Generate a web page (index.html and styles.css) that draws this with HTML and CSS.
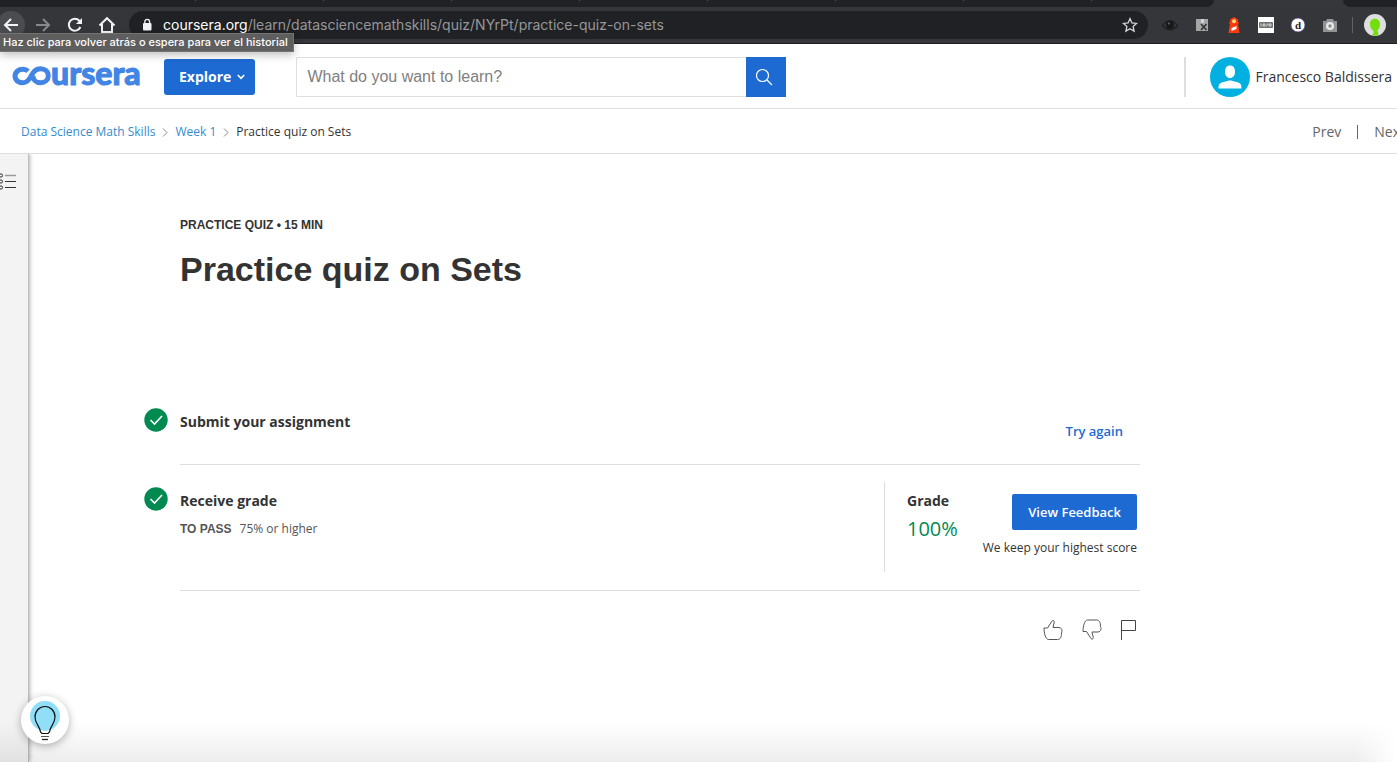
FILE: index.html
```html
<!DOCTYPE html>
<html lang="en">
<head>
<meta charset="utf-8">
<title>Practice quiz on Sets | Coursera</title>
<link rel="stylesheet" href="styles.css">
</head>
<body>
<div class="browser">
  <div class="tabs"><i class="tab"></i><i class="tab"></i><i class="tab"></i><i class="tab"></i><i class="tab"></i><i class="tab"></i><i class="tab"></i><i class="tab"></i><i class="tab-rest"></i><i class="tab-active"></i><i class="tab-end"></i></div>
  <div class="toolbar">
    <button class="nav-btn nav-back" aria-label="Back"><svg width="16" height="16" viewBox="0 0 16 16"><path d="M15 8H2M8 2 2 8l6 6" stroke="#f1f3f4" stroke-width="2" fill="none"/></svg></button>
    <button class="nav-btn" aria-label="Forward"><svg width="16" height="16" viewBox="0 0 16 16"><path d="M1 8h13M8 2l6 6-6 6" stroke="#86888a" stroke-width="2" fill="none"/></svg></button>
    <button class="nav-btn" aria-label="Reload"><svg width="16" height="16" viewBox="0 0 16 16"><path d="M13.400 10A6 6 0 1 1 12.300 3.700L14 5.400" stroke="#f1f3f4" stroke-width="2" fill="none"/><path d="M15 1v6H9z" fill="#f1f3f4"/></svg></button>
    <button class="nav-btn" aria-label="Home"><svg width="18" height="18" viewBox="0 0 18 18"><path d="M1.500 9.500 9 2.200l7.500 7.300M4 8v8h10V8" stroke="#f1f3f4" stroke-width="2" fill="none"/></svg></button>
    <div class="address">
      <svg width="10" height="14" viewBox="0 0 10 14"><rect x="1" y="5" width="8.500" height="7.500" rx="1" fill="#f1f3f4"/><path d="M2.800 6V3.700a2.400 2.400 0 0 1 4.800 0V6" fill="none" stroke="#f1f3f4" stroke-width="1.300"/></svg>
      <span class="url"><b class="host">coursera.org</b>/learn/datasciencemathskills/quiz/NYrPt/practice-quiz-on-sets</span>
      <svg width="16" height="16" viewBox="0 0 16 16"><path d="m8 1.600 1.900 4.300 4.700.5-3.500 3.100 1 4.600L8 11.700l-4.100 2.400 1-4.600L1.400 6.400l4.700-.5z" fill="none" stroke="#d4d6d8" stroke-width="1.300"/></svg>
    </div>
    <div class="extensions">
      <svg width="16" height="16" viewBox="0 0 16 16"><path d="M.5 8.500Q8-1.500 15.500 8.500 8 17 .5 8.500z" fill="#35373b" stroke="#1c1e20" stroke-width="1.200"/><circle cx="8" cy="8" r="4" fill="#17191b"/><circle cx="7" cy="6.500" r="1" fill="#64676a"/></svg>
      <svg width="16" height="16" viewBox="0 0 16 16"><path d="M2 2h12v12H2z" fill="#a4a5a6"/><path d="M7 2h3v4H7z" fill="#d2d2d2"/><path d="m7 7 5.500 6m0-6L7 13" stroke="#303236" stroke-width="1.600"/></svg>
      <svg width="16" height="16" viewBox="0 0 16 16"><path d="M8 0 4 2.500V5H3v1.500h1L2.500 16h11L12 6.500h1V5h-1V2.500z" fill="#fa3a0e"/><circle cx="8" cy="4.300" r="2" fill="#ffdf72"/><path d="m5.500 11 5-2v3l-5 2z" fill="#fff"/></svg>
      <svg width="16" height="16" viewBox="0 0 16 16"><path d="M0 0h16v16H0z" fill="#fff"/><rect x="1" y="5" width="14" height="6" rx="1" fill="#717171"/><path d="M3 6.500v3M5 7h2v2H5zM9.800 6.500 8.300 9.500M11 7h2v2h-2z" stroke="#eee" stroke-width=".8" fill="none"/></svg>
      <svg width="16" height="16" viewBox="0 0 16 16"><circle cx="8" cy="8" r="7" fill="#fff" stroke="#51347b" stroke-width=".7"/><text x="8" y="12" text-anchor="middle" class="ext-letter">d</text></svg>
      <svg width="16" height="16" viewBox="0 0 16 16"><path d="M1 4h3l1-2h6l1 2h3v11H1z" fill="#929394"/><circle cx="8" cy="9" r="4" fill="#e8e8e8"/><circle cx="8" cy="9" r="1.700" fill="#8a8b8c"/></svg>
    </div>
    <span class="toolbar-rule"></span>
    <svg class="profile" width="22" height="22" viewBox="0 0 22 22"><circle cx="11" cy="11" r="11" fill="#dedede"/><path d="M6 9.500C6 3 16 3 16 9.500c0 4-1 5.500-2.500 6.500 0 2 1 3 1 4.500-2 1.500-5 1.500-6.500.5 2-1 2-3 1-4.500C7 15 6 13 6 9.500z" fill="#72df0c"/></svg>
  </div>
  <div class="tooltip" role="tooltip">Haz clic para volver atrás o espera para ver el historial</div>
</div>

<header class="site-header">
  <a class="logo" href="#" aria-label="coursera"><svg width="39" height="20" viewBox="0 0 39 20"><path d="M16 5.300C13.500 2.700 8.500 2.500 5.500 5 1.800 8.200 2.400 13.500 6.500 15.800c4.500 2.300 9 .2 11.500-3.800C20.500 7.500 22.500 2.700 28.500 2.700c4.500 0 7.800 3 7.800 7s-3.300 7-7.800 7-7.500-3-7.500-7" fill="none" stroke="#4285e4" stroke-width="5"/></svg><span class="logo-text">ursera</span></a>
  <button class="explore">Explore <svg width="8" height="6" viewBox="0 0 8 6"><path d="m.8 1 3.200 3.300L7.200 1" fill="none" stroke="#fff" stroke-width="1.700"/></svg></button>
  <form class="search">
    <input type="text" class="search-input" placeholder="What do you want to learn?" aria-label="What do you want to learn?">
    <button type="button" class="search-btn" aria-label="Search"><svg width="18" height="18" viewBox="0 0 18 18"><circle cx="7.500" cy="7.500" r="6" fill="none" stroke="#fff" stroke-width="1.200"/><path d="m12 12 5 5" stroke="#fff" stroke-width="1.300"/></svg></button>
  </form>
  <a class="account" href="#"><svg width="40" height="40" viewBox="0 0 40 40"><circle cx="20" cy="20" r="20" fill="#00b0e0"/><path d="M15 15c0-4.500 2-6.500 5-6.500s5 2 5 6.500c0 3.500-2 6-5 6s-5-2.500-5-6zM8.500 31.500c0-5 1.500-5.500 5-6.500 3-.9 5-1.500 6.500-1.500s3.500.6 6.500 1.500c3.500 1 5 1.500 5 6.500z" fill="#fff"/></svg><span>Francesco Baldissera</span></a>
</header>

<nav class="crumbs">
  <a href="#">Data Science Math Skills</a>
  <svg width="6" height="9" viewBox="0 0 6 9"><path d="m1 .5 4 4-4 4" fill="none" stroke="#888"/></svg>
  <a href="#">Week 1</a>
  <svg width="6" height="9" viewBox="0 0 6 9"><path d="m1 .5 4 4-4 4" fill="none" stroke="#888"/></svg>
  <span>Practice quiz on Sets</span>
  <div class="pager"><a href="#">Prev</a><i class="pager-rule"></i><a href="#">Next</a></div>
</nav>

<div class="content">
  <aside class="rail"><button class="rail-btn" aria-label="Open outline"><svg width="17" height="18" viewBox="0 0 17 18"><path d="M5 3.500h11" stroke="#999" stroke-width="1.500"/><path d="M5 9.500h11M5 15.500h11" stroke="#333"/><g fill="none" stroke="#333"><circle cx="1" cy="3.500" r="1.600"/><circle cx="1" cy="9.500" r="1.600"/><circle cx="1" cy="15.500" r="1.600"/></g></svg></button></aside>
  <main class="main">
    <p class="kicker">PRACTICE QUIZ • 15 MIN</p>
    <h1 class="title">Practice quiz on Sets</h1>
    <section class="step step-submit">
      <svg class="check" width="24" height="24" viewBox="0 0 24 24"><circle cx="12" cy="12" r="11.700" fill="#008a52"/><path d="m6.500 12 4 4 7.500-8" fill="none" stroke="#fff" stroke-width="1.600"/></svg>
      <h2 class="step-title">Submit your assignment</h2>
      <button class="try">Try again</button>
    </section>
    <section class="step step-grade">
      <svg class="check" width="24" height="24" viewBox="0 0 24 24"><circle cx="12" cy="12" r="11.700" fill="#008a52"/><path d="m6.500 12 4 4 7.500-8" fill="none" stroke="#fff" stroke-width="1.600"/></svg>
      <div>
        <h2 class="step-title">Receive grade</h2>
        <p class="pass"><b>TO PASS</b><span>75% or higher</span></p>
      </div>
      <div class="grade">
        <div><h2 class="step-title">Grade</h2><p class="score">100%</p></div>
        <div class="feedback"><button class="view">View Feedback</button><p class="keep">We keep your highest score</p></div>
      </div>
    </section>
    <div class="reactions">
      <button aria-label="Like"><svg width="20" height="22" viewBox="0 0 20 22"><path d="M1 9h3.500L9 2c.6-1 2.300-.7 2.300.8L10 8.500h6c3 .5 3.500 3 2.500 5.500 0 4-1 6.500-4 6.500H5.500C2.500 20.500 1 14 1 9z" fill="none" stroke="#555"/></svg></button>
      <button aria-label="Dislike"><svg width="20" height="22" viewBox="0 0 20 22"><path d="M1 12.500h3.500L9 19.500c.6 1 2.300.7 2.300-.8L10 13h6c3-.5 3.500-3 2.500-5.500 0-4-1-6.500-4-6.500H5.500C2.500 1 1 7.500 1 12.500z" fill="none" stroke="#555"/></svg></button>
      <button aria-label="Report an issue"><svg width="16" height="22" viewBox="0 0 16 22"><path d="M.5 21V1.500h14v10H.5" fill="none" stroke="#444"/></svg></button>
    </div>
  </main>
  <div class="bottom-shade"></div>
</div>
<button class="hint" aria-label="Hint"><svg width="32" height="42" viewBox="0 0 32 42"><circle cx="16" cy="17" r="15" fill="#91def8"/><path d="M11.500 33c-.5-6-5.500-8-5.500-15C6 12 10.500 7.500 16 7.500S26 12 26 18c0 7-5 9-5.500 15l-1.500 1.500h-6z" fill="none" stroke="#111" stroke-width="1.200"/><path d="M12 37.500h8" stroke="#555"/><path d="M13 40.500h6" stroke="#222" stroke-width="1.300"/></svg></button>
</body>
</html>
```
FILE: styles.css
```css
* { box-sizing: border-box; }
body {
  margin: 0;
  min-height: 100vh;
  display: flex;
  flex-direction: column;
  overflow: hidden;
  background: #fff;
  color: #333;
  font: 14px/20px "Open Sans", sans-serif;
}
h1, h2, p { margin: 0; }
button { border: 0; padding: 0; background: none; font: inherit; color: inherit; }
a { color: inherit; text-decoration: none; }
svg { display: block; flex: none; }

.browser { position: relative; background: #35363a; border-bottom: 1px solid #1e1f22; }
.tabs { display: flex; height: 7px; background: #35373b; }
.tab { width: 128px; height: 7px; background: linear-gradient(#55575a, #55575a) right top / 1px 1px no-repeat #202124; }
.tab:first-child { width: 196px; }
.tab-rest { flex: 1; background: #202124; border-radius: 0 0 8px 0; }
.tab-active { width: 129px; }
.tab-end { width: 54px; background: #202124; border-radius: 0 0 0 8px; }
.toolbar { display: flex; align-items: center; height: 36px; padding-right: 11px; }
.nav-btn { width: 32px; height: 28px; display: grid; place-items: center; flex: none; }
.nav-back { width: 28px; margin: 0 2px 0 -3px; border-radius: 14px; background: #4a4c50; }
.address {
  flex: 1;
  display: flex;
  align-items: center;
  height: 28px;
  margin: 0 14px 0 6px;
  padding: 0 10px 0 13px;
  border-radius: 14px;
  background: #202124;
}
.url { flex: 1; margin-left: 11px; font: 14px/20px Inter, sans-serif; color: #95979a; white-space: nowrap; }
.host { font-weight: 400; color: #fff; }
.extensions { display: flex; gap: 16px; }
.ext-letter { font: bold 11px "Liberation Serif", serif; fill: #222; }
.toolbar-rule { width: 1px; height: 16px; margin: 0 11px 0 14px; background: #606266; }
.tooltip {
  position: absolute;
  left: 0;
  top: 33px;
  z-index: 2;
  padding: 0 5px 0 3px;
  border: 1px solid #747474;
  border-left: 0;
  background: #5e5e5e;
  box-shadow: 0 3px 8px rgba(0, 0, 0, .25);
  color: #fff;
  font: 500 11px/17px Inter, sans-serif;
  white-space: nowrap;
}

.site-header { display: flex; align-items: center; height: 65px; padding: 2px 5px 0 12px; border-bottom: 1px solid #e0e0e0; }
.logo { display: flex; align-items: center; width: 152px; color: #4285e4; }
.logo svg { margin-top: -2px; }
.logo-text { margin-top: -8px; font: 900 32px/32px Lato, sans-serif; -webkit-text-stroke: 1px #4285e4; }
.explore {
  display: flex;
  align-items: center;
  gap: 6px;
  height: 36px;
  padding: 0 10px 0 15px;
  border-radius: 3px;
  background: #1d6ad3;
  color: #fff;
  font-weight: 700;
}
.search { display: flex; width: 490px; height: 40px; margin-left: 41px; }
.search-input {
  flex: 1;
  min-width: 0;
  padding: 0 10px;
  border: 1px solid #dedede;
  border-right: 0;
  border-radius: 2px 0 0 2px;
  background: #fff;
  font: 16px "Liberation Sans", sans-serif;
}
.search-input::placeholder { color: #808080; opacity: 1; }
.search-btn { display: grid; place-items: center; width: 40px; padding-right: 4px; background: #1d6ad3; }
.account { display: flex; align-items: center; gap: 6px; height: 40px; margin-left: auto; padding-left: 24px; border-left: 2px solid #dedede; }

.crumbs { display: flex; align-items: center; gap: 7px; height: 45px; padding: 2px 0 0 21px; border-bottom: 1px solid #dedede; font-size: 12px; white-space: nowrap; }
.crumbs > a { color: #338bd0; }
.pager { display: flex; align-items: center; gap: 16px; margin: 0 -8px 0 auto; color: #666; font-size: 14px; }
.pager-rule { width: 1px; height: 14px; background: #666; }

.content { position: relative; flex: 1; display: flex; }
.rail { width: 29px; flex: none; border-right: 1px solid #bdbdbd; background: #f3f3f3; box-shadow: 1px 0 4px rgba(0, 0, 0, .3); clip-path: inset(0 -8px 0 0); }
.rail-btn { display: block; margin-top: 18px; }
.main { width: 996px; margin-left: 115px; padding-top: 61px; }
.kicker { padding-left: 36px; font: bold 12px/20px "Liberation Sans", sans-serif; }
.title { margin-top: 13px; padding-left: 36px; font: bold 34px/42px "Liberation Sans", sans-serif; }
.step { position: relative; display: grid; grid-template-columns: 24px 1fr auto; column-gap: 12px; }
.step::after { content: ""; grid-column: 2 / -1; height: 1px; background: #dedede; }
.step-submit { margin-top: 118px; grid-template-rows: 56px 1px; }
.step-title { margin-top: 4px; font-size: 14px; line-height: 20px; }
.try { align-self: start; margin: 13px 17px 0 0; color: #1d6ad3; font-size: 13px; font-weight: 600; line-height: 20px; }
.step-grade { margin-top: 22px; grid-template-rows: 103px 1px; }
.pass { display: flex; gap: 8px; margin-top: 8px; color: #555; font-size: 12px; }
.pass b { font-family: "Liberation Sans", sans-serif; }
.grade { display: flex; justify-content: space-between; width: 256px; height: 90px; margin-top: -5px; padding: 5px 3px 0 22px; border-left: 1px solid #dedede; }
.score { margin-top: 4px; color: #008a52; font-size: 20px; line-height: 28px; }
.feedback { display: flex; flex-direction: column; align-items: flex-end; padding-top: 7px; }
.view { height: 36px; padding: 0 16px; border-radius: 2px; background: #1d6ad3; color: #fff; font-size: 13px; font-weight: 600; }
.keep { margin-top: 8px; font-size: 12px; }
.reactions { display: flex; justify-content: flex-end; gap: 19px; margin-top: 28px; padding-right: 3px; }
.bottom-shade {
  position: absolute;
  inset: auto 0 0 0;
  height: 40px;
  background: linear-gradient(transparent, rgba(0, 0, 0, .07));
  mask-image: linear-gradient(90deg, #000 97%, transparent);
}
.hint {
  position: fixed;
  left: 21px;
  bottom: 18px;
  display: grid;
  place-items: center;
  width: 48px;
  height: 48px;
  border-radius: 50%;
  background: #fff;
  box-shadow: 0 2px 8px rgba(0, 0, 0, .3);
}
```
